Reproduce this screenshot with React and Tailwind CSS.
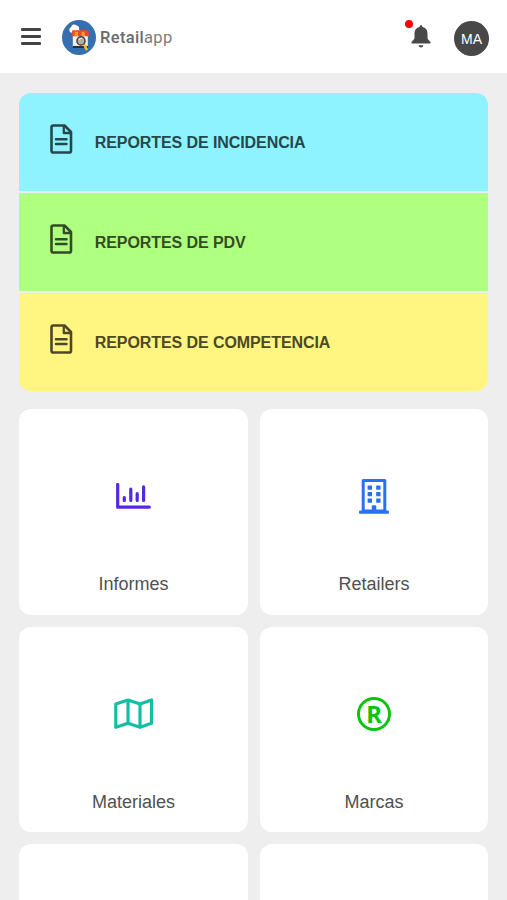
import React from "react";

// ── Constants ──────────────────────────────────────────────────────────────
const REPORTS = [
  { label: "REPORTES DE INCIDENCIA", row: "bg-[#8ef3ff]", ink: "text-[#27474b]" },
  { label: "REPORTES DE PDV", row: "bg-[#afff80]", ink: "text-[#344b26]" },
  { label: "REPORTES DE COMPETENCIA", row: "bg-[#fff580]", ink: "text-[#4d4926]" },
];

const MODULES = [
  { label: "Informes", Icon: ChartIcon },
  { label: "Retailers", Icon: BuildingIcon },
  { label: "Materiales", Icon: MapIcon },
  { label: "Marcas", Icon: RegisteredIcon },
  { label: "", Icon: null },
  { label: "", Icon: null },
];

// ── Icons ──────────────────────────────────────────────────────────────────

function Logo() {
  return (
    <svg width="34" height="35" viewBox="0 0 34 34" preserveAspectRatio="none" className="flex-shrink-0">
      <circle cx="17" cy="17" r="17" fill="#356faf" />
      <path d="M10 12.500a3 3 0 0 1-.8-5.800 3 3 0 0 1 5.200-1.300 2.700 2.700 0 0 1 2.600 2.800l1 4.300z" fill="#fff" />
      <path d="M10.800 14h15v12.500h-15z" fill="#eef1f4" />
      <path d="M10.800 25.200h15.300v2H10.800z" fill="#26313a" />
      <path d="M10.300 10h16l1 5.800H9.600z" fill="#e94a2b" />
      <path d="M12.800 11.500h3.200v4.300h-3.500zM19.500 11.500h3l.5 4.300h-3.500z" fill="#f99b2c" />
      <path d="m22.300 24 2.200 4.300" stroke="#f8c22c" strokeWidth="2.600" strokeLinecap="round" />
      <circle cx="19" cy="20.300" r="4" fill="#b5ada3" stroke="#493e3c" strokeWidth="1.500" />
      <path d="M17 19.500q1-2 3-1.700" stroke="#ece8e0" fill="none" />
    </svg>
  );
}

function BellIcon() {
  return (
    <svg width="20" height="23" viewBox="0 0 20 23" fill="#484848">
      <path d="M10 .3c.9 0 1.400.7 1.400 1.600 3.400.7 5.100 3.200 5.100 6.300v4.200c0 1.400.7 2.400 1.800 3.300l.9 1c.7.7.5 1.800-.6 1.800H1.400c-1.100 0-1.300-1.100-.6-1.800l.9-1c1.100-.9 1.800-1.900 1.800-3.300V8.200c0-3.100 1.700-5.600 5.100-6.300 0-.9.500-1.600 1.400-1.600z" />
      <path d="M7.600 20.200h4.800c-.3 1.500-1.100 2.200-2.400 2.200s-2.100-.7-2.400-2.200z" />
    </svg>
  );
}

function FileIcon() {
  return (
    <svg width="23" height="30" viewBox="0 0 23 30" fill="none" stroke="currentColor" strokeWidth="2.600" strokeLinejoin="round">
      <path d="M3.300 1.500h11.200l6.500 6.500v18.700q0 1.800-1.800 1.800H3.300q-1.800 0-1.800-1.800V3.300q0-1.800 1.800-1.800z" />
      <path d="M13.800 2v7h7" strokeWidth="2.300" />
      <path d="M6 15.300h10.500M6 20h10.500" strokeWidth="2.500" strokeLinecap="round" />
    </svg>
  );
}

function ChartIcon() {
  return (
    <svg width="35" height="26" viewBox="0 0 35 26" fill="none" stroke="#5527e2" strokeWidth="3.200" strokeLinecap="round">
      <path d="M1.700 1.500v22.700h31.600" strokeLinejoin="round" />
      <path d="M8.300 14.500v3M14.800 6.200v11.300M21.200 10.500v7M27.600 3.800v13.700" />
    </svg>
  );
}

function BuildingIcon() {
  return (
    <svg width="30" height="36" viewBox="0 0 30 36" fill="#2970f5">
      <path d="M4.200 2.500h21.600V33H4.200z" fill="none" stroke="#2970f5" strokeWidth="3" strokeLinejoin="round" />
      <path d="M8.600 7.500H13v4.300H8.600zM17.200 7.500h4.300v4.300h-4.300zM8.600 14H13v4.300H8.600zM17.200 14h4.300v4.300h-4.300zM8.600 20.500H13v4.300H8.600zM17.200 20.500h4.300v4.300h-4.300z" />
      <path d="M12.800 34v-5.700q0-1 1-1h2.400q1 0 1 1V34z" />
      <rect y="32.500" width="30" height="3.300" rx="1" />
    </svg>
  );
}

function MapIcon() {
  return (
    <svg width="39" height="32" viewBox="0 0 39 32" fill="none" stroke="#11bfa5" strokeWidth="3.200" strokeLinejoin="round">
      <path d="M1.800 6 14 2l12 4 11.500-4v23.300l-11.500 4-12-4-12.200 4z" />
      <path d="M14 2v23.300M26 6v23.300" />
    </svg>
  );
}

function RegisteredIcon() {
  return (
    <div className="flex size-[34px] items-center justify-center rounded-full border-[3px] border-[#0bc40f] font-['Noto_Sans',sans-serif] text-[24px] font-bold leading-none text-[#0bc40f]">
      R
    </div>
  );
}

// ── Sub-components ─────────────────────────────────────────────────────────

function Header() {
  return (
    <header className="flex h-[73px] items-center bg-white pl-[21px] pr-[18px] pt-[2px]">
      <button aria-label="Menu" className="mt-[-2px] flex w-5 flex-col gap-1">
        <span className="h-[3px] w-full rounded-[1px] bg-[#444444]" />
        <span className="h-[3px] w-full rounded-[1px] bg-[#444444]" />
        <span className="h-[3px] w-full rounded-[1px] bg-[#444444]" />
      </button>
      <div className="ml-[21px] flex items-center gap-1">
        <Logo />
        <span className="pt-0.5 font-[Roboto,sans-serif] text-[16.500px] leading-none tracking-[0.020em] text-[#7d7d7d]">
          <span className="font-medium text-[#6a6a6a]">Retail</span>app
        </span>
      </div>
      <div className="ml-auto flex items-center gap-[23px]">
        <button aria-label="Notificaciones" className="relative mt-[-2px]">
          <BellIcon />
          <span className="absolute -left-[6px] -top-[5px] size-2 rounded-full bg-[#ff0000]" />
        </button>
        <div className="mt-px flex size-[35px] items-center justify-center rounded-full bg-[#484848] pt-0.5 text-[14px] leading-none text-white">
          MA
        </div>
      </div>
    </header>
  );
}

function ReportRow({ label, row, ink }) {
  return (
    <a className={`flex h-[98px] items-center pl-[31px] ${row} ${ink}`}>
      <span className="mb-1.5">
        <FileIcon />
      </span>
      <span className="ml-[21.500px] mt-0.5 text-[16px] font-bold leading-none tracking-[-0.005em]">{label}</span>
    </a>
  );
}

function ModuleCard({ label, Icon }) {
  return (
    <a className="flex h-[205.500px] flex-col items-center rounded-xl bg-white text-[#505050]">
      <span className="mt-[67px] flex h-10 items-center">{Icon && <Icon />}</span>
      <span className="mt-[57px] text-[18px] leading-[22px]">{label}</span>
    </a>
  );
}

// ── Main component ─────────────────────────────────────────────────────────

export default function App() {
  return (
    <div className="h-[900px] w-[507px] overflow-hidden bg-[#eeeeee] font-['Liberation_Sans',Arial,sans-serif]">
      <Header />
      <main className="pl-[19.250px] pr-[18.750px] pt-5">
        <div className="flex flex-col gap-0.5 overflow-hidden rounded-xl">
          {REPORTS.map((r) => (
            <ReportRow key={r.label} {...r} />
          ))}
        </div>
        <div className="mt-[18px] grid grid-cols-2 gap-3">
          {MODULES.map((m, i) => (
            <ModuleCard key={i} {...m} />
          ))}
        </div>
      </main>
    </div>
  );
}
